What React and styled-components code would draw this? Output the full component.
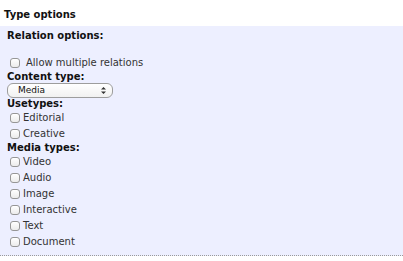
import React from "react";
import styled, { createGlobalStyle } from "styled-components";

const GlobalStyle = createGlobalStyle`
  html, body {
    margin: 0;
    padding: 0;
    background: #fff;
  }

  body {
    font-family: "DejaVu Sans", Verdana, sans-serif;
    font-size: 10px;
    color: #222;
  }
`;

const Section = styled.div`
  width: 403px;
`;

const SectionTitle = styled.h3`
  margin: 0;
  padding: 9px 4px 5px;
  font-size: 10px;
  line-height: 12px;
  font-weight: bold;
  color: #111;
`;

const OptionsPanel = styled.div`
  background: #edefff;
  border-bottom: 1px dotted #9a9a9a;
  padding: 4px 7px 5px;
`;

const GroupLegend = styled.div`
  font-weight: bold;
  line-height: 12px;
  color: #111;
  margin-bottom: 13px;
`;

const FieldLabel = styled.div`
  font-weight: bold;
  line-height: 12px;
  color: #111;
`;

const CheckRow = styled.label`
  display: flex;
  align-items: center;
  height: 16px;
  line-height: 16px;
  color: #333;
  cursor: pointer;
`;

const CheckBox = styled.input.attrs({ type: "checkbox" })`
  appearance: none;
  box-sizing: border-box;
  width: 10px;
  height: 10px;
  margin: 0 ${(p) => p.$gap}px 0 3px;
  border: 1px solid #969696;
  border-radius: 3px;
  background: linear-gradient(#ffffff, #ececec);
  box-shadow: inset 0 1px 0 #fff;
  flex: none;
`;

const SelectWrap = styled.div`
  position: relative;
  width: 106px;
  height: 15px;
`;

const Select = styled.select`
  appearance: none;
  box-sizing: border-box;
  width: 100%;
  height: 100%;
  margin: 0;
  padding: 0 0 0 10px;
  border: 1px solid #9d9d9d;
  border-radius: 6px;
  background: linear-gradient(#ffffff, #f1f1f1);
  font-family: "DejaVu Sans", Verdana, sans-serif;
  font-size: 9px;
  line-height: 13px;
  color: #111;
  outline: none;
`;

const ArrowIcon = styled.svg`
  position: absolute;
  right: 7px;
  top: 4px;
  pointer-events: none;
`;

function Checkbox({ label, gap = 3 }) {
  return (
    <CheckRow>
      <CheckBox $gap={gap} />
      {label}
    </CheckRow>
  );
}

const usetypes = ["Editorial", "Creative"];
const mediaTypes = ["Video", "Audio", "Image", "Interactive", "Text", "Document"];

export default function App() {
  return (
    <>
      <GlobalStyle />
      <Section>
        <SectionTitle>Type options</SectionTitle>
        <OptionsPanel>
          <GroupLegend>Relation options:</GroupLegend>
          <Checkbox label="Allow multiple relations" gap={6} />
          <FieldLabel>Content type:</FieldLabel>
          <SelectWrap>
            <Select defaultValue="media">
              <option value="media">Media</option>
            </Select>
            <ArrowIcon width="5" height="7" viewBox="0 0 5 7">
              <path d="M2.5 0 L5 2.6 L0 2.6 Z M2.5 7 L5 4.4 L0 4.4 Z" fill="#333" />
            </ArrowIcon>
          </SelectWrap>
          <FieldLabel>Usetypes:</FieldLabel>
          {usetypes.map((t) => (
            <Checkbox key={t} label={t} />
          ))}
          <FieldLabel>Media types:</FieldLabel>
          {mediaTypes.map((t) => (
            <Checkbox key={t} label={t} />
          ))}
        </OptionsPanel>
      </Section>
    </>
  );
}
